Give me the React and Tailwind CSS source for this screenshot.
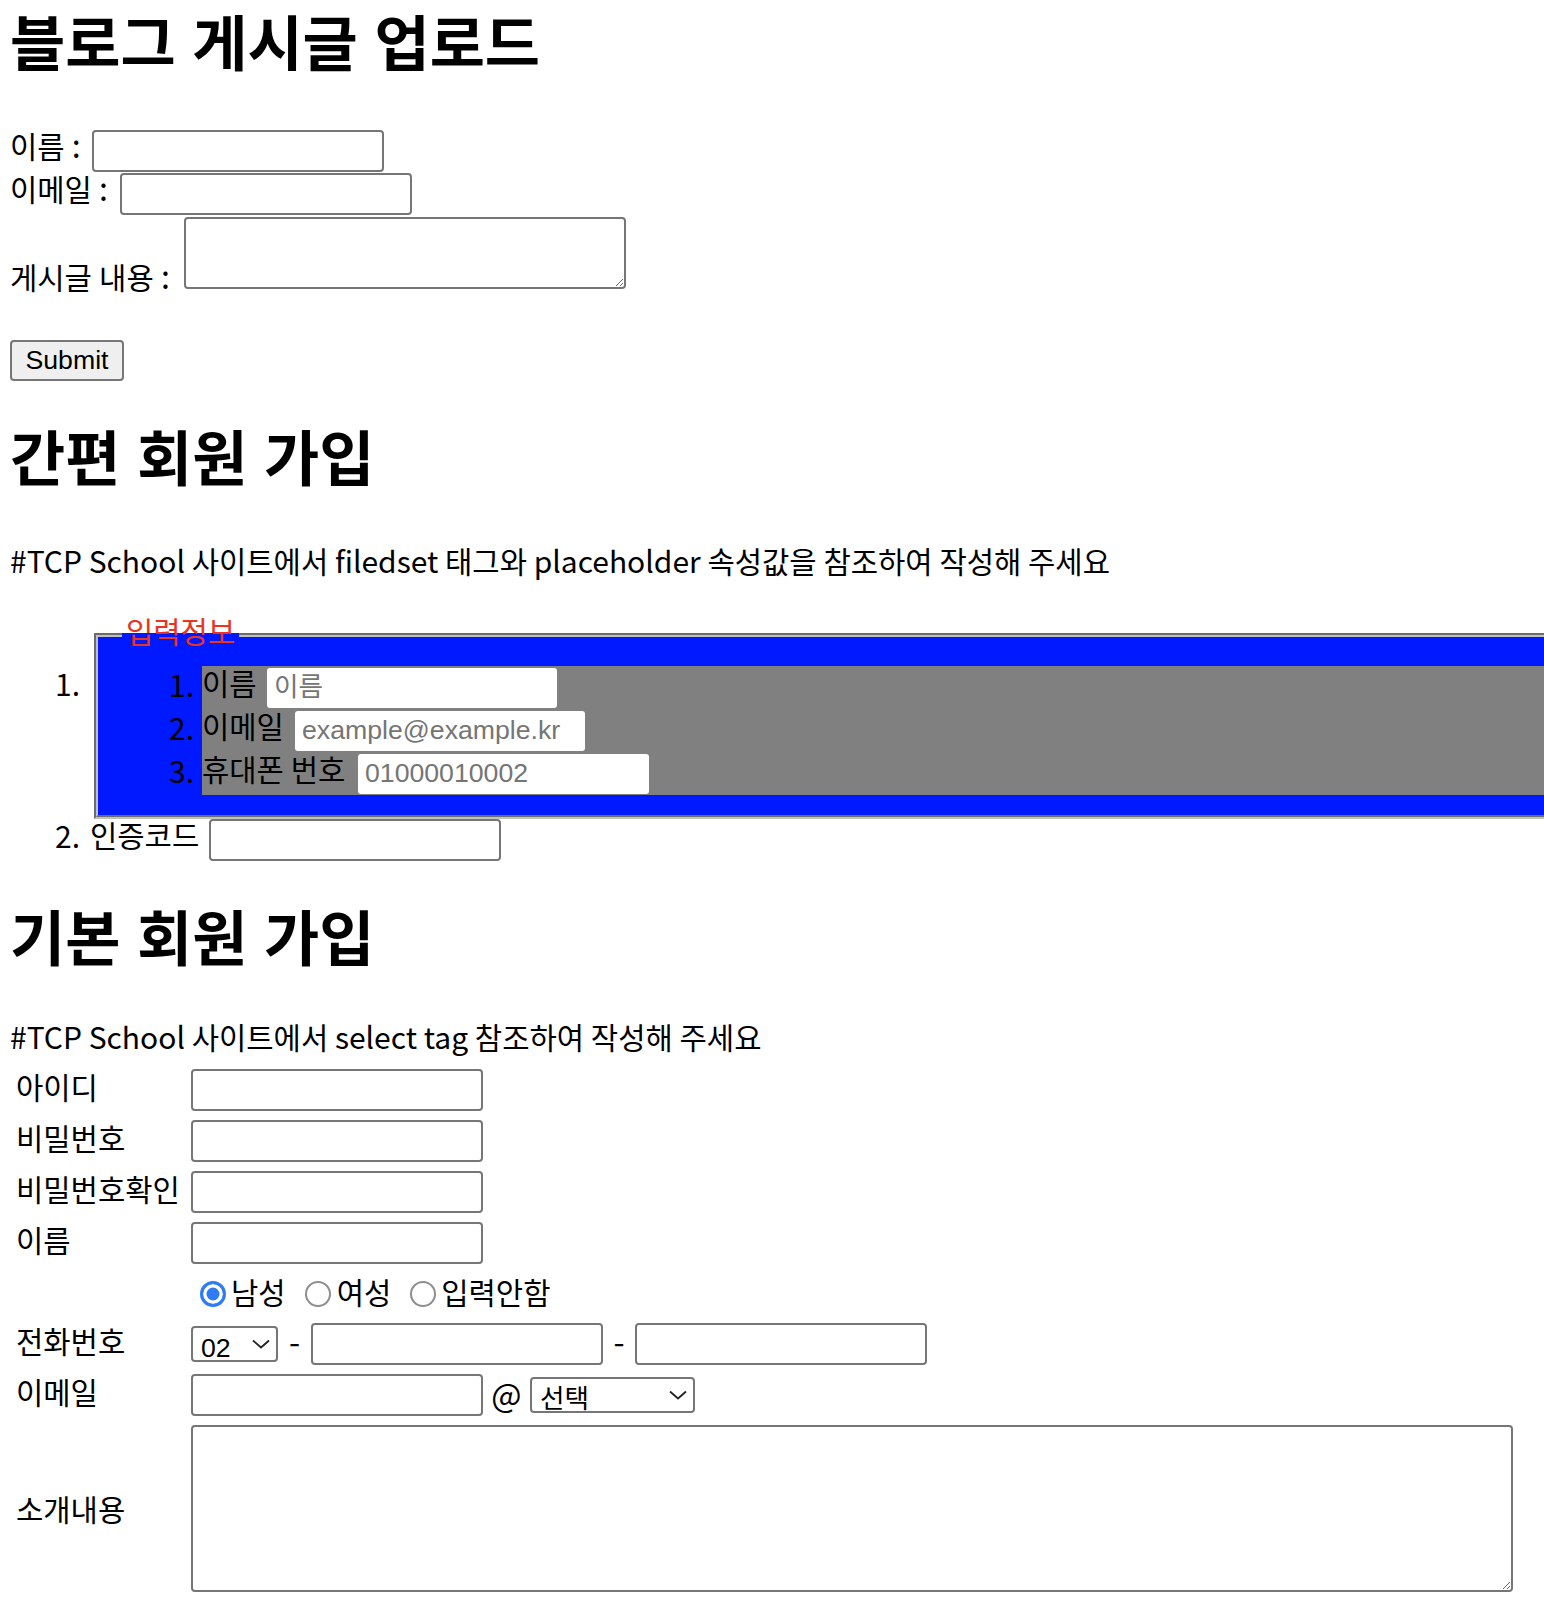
import React from "react";

const HANGUL = /([\uAC00-\uD7A3]+)/;

// Hangul runs get a slightly smaller size so they sit like the reference glyphs
const K = ({ children }) => {
  const parts = String(children).split(HANGUL);
  return parts.map((part, i) =>
    HANGUL.test(part) ? (
      <span key={i} className="text-[29.7px]">
        {part}
      </span>
    ) : (
      <span key={i}>{part}</span>
    )
  );
};

const field =
  "h-[42px] shrink-0 rounded-[4px] border-2 border-[#767676] bg-white px-[4px] text-[26.67px] leading-normal font-['Liberation_Sans','Noto_Sans_CJK_KR',sans-serif] outline-none";

const inner =
  "h-[40px] shrink-0 rounded-[3px] bg-white pl-[7px] text-[26.67px] leading-normal font-['Liberation_Sans','Noto_Sans_CJK_KR',sans-serif] placeholder:text-[#757575] outline-none";

const heading = "text-[60px] font-bold leading-[80px] [word-spacing:3px]";

const Chevron = () => (
  <svg
    width="18"
    height="10"
    viewBox="0 0 18 10"
    className="pointer-events-none absolute right-[8px] top-1/2 -translate-y-1/2"
  >
    <polyline
      points="1,1.5 9,8.5 17,1.5"
      fill="none"
      stroke="#222"
      strokeWidth="1.8"
    />
  </svg>
);

const Select = ({ width, children }) => (
  <div className={`relative h-[36px] shrink-0 ${width}`}>
    <select className="block h-full w-full appearance-none rounded-[4px] border-2 border-[#767676] bg-white pl-[8px] text-[26.67px] leading-normal text-black font-['Liberation_Sans','Noto_Sans_CJK_KR',sans-serif] outline-none">
      {children}
    </select>
    <Chevron />
  </div>
);

const Radio = ({ checked, className }) => (
  <input
    type="radio"
    name="gender"
    defaultChecked={checked}
    className={`h-[26px] w-[26px] shrink-0 appearance-none rounded-full border-2 border-[#8e8e8e] bg-white checked:border-[3px] checked:border-[#2f7cf6] checked:bg-[#2f7cf6] checked:shadow-[inset_0_0_0_3.5px_white] ${className}`}
  />
);

const innerRows = [
  { no: "1.", label: "이름", w: "w-[65px]", ph: "이름", size: "text-[23px]", iw: "w-[290px]" },
  { no: "2.", label: "이메일", w: "w-[93px]", ph: "example@example.kr", size: "", iw: "w-[290px]" },
  { no: "3.", label: "휴대폰 번호", w: "w-[156px]", ph: "01000010002", size: "", iw: "w-[291px]" },
];

export default function App() {
  return (
    <div className="min-h-[1610px] w-[1544px] overflow-hidden bg-white pl-[10px] text-[32px] leading-[40px] text-black font-['Noto_Sans_CJK_KR',sans-serif]">
      {/* 블로그 게시글 업로드 */}
      <h1 className={heading}>블로그 게시글 업로드</h1>

      <form className="mt-[50px]">
        <div className="flex h-[42px] items-center">
          <label className="mb-[12px] w-[82px] shrink-0">
            <K>이름 :</K>
          </label>
          <input type="text" className={`${field} w-[292px]`} />
        </div>
        <div className="mt-[1px] flex h-[42px] items-center">
          <label className="mb-[12px] w-[110px] shrink-0">
            <K>이메일 :</K>
          </label>
          <input type="email" className={`${field} w-[292px]`} />
        </div>
        <div className="mt-[2px] flex items-end">
          <label className="-mb-[8px] w-[174px] shrink-0">
            <K>게시글 내용 :</K>
          </label>
          <textarea className="h-[72px] w-[442px] shrink-0 resize rounded-[4px] border-2 border-[#767676] bg-white outline-none" />
        </div>
        <button
          type="button"
          className="mt-[51px] block h-[41px] w-[114px] rounded-[4px] border-2 border-[#767676] bg-[#efefef] text-[26.67px] leading-none font-['Liberation_Sans',Arial,sans-serif]"
        >
          Submit
        </button>
      </form>

      {/* 간편 회원 가입 */}
      <h1 className={`mt-[34px] ${heading}`}>간편 회원 가입</h1>
      <p className="mt-[45px] h-[40px] whitespace-nowrap text-[30px]">
        <K>#TCP School 사이트에서 filedset 태그와 placeholder 속성값을 참조하여 작성해 주세요</K>
      </p>

      <ol className="text-[30px]">
        <li className="mt-[35px] flex">
          <div className="w-[80px] shrink-0 pr-[10px] pt-[51px]">
            <div className="flex h-[43px] items-center justify-end pb-[10px]">1.</div>
          </div>
          <fieldset className="ml-[4px] w-[1500px] shrink-0 border-4 border-[#c0c0c0] bg-[#0019ff] px-[24px] pt-[11px] pb-[20px] [border-style:groove]">
            <legend className="h-[40px] px-[4px] pb-[10px] leading-[30px] text-[#eb3323]">
              <K>입력정보</K>
            </legend>
            <ol>
              {innerRows.map((row) => (
                <li key={row.no} className="flex h-[43px]">
                  <span className="flex w-[80px] shrink-0 items-center justify-end pr-[8px] pb-[8px]">
                    {row.no}
                  </span>
                  <div className="flex flex-1 items-center bg-[#808080]">
                    <span className={`mb-[10px] shrink-0 ${row.w}`}>
                      <K>{row.label}</K>
                    </span>
                    <input
                      type="text"
                      placeholder={row.ph}
                      className={`${inner} ${row.iw} ${row.size}`}
                    />
                  </div>
                </li>
              ))}
            </ol>
          </fieldset>
        </li>
        <li className="flex h-[43px] items-start">
          <span className="flex h-[42px] w-[80px] shrink-0 items-center justify-end pr-[10px] pb-[10px]">
            2.
          </span>
          <span className="flex h-[42px] w-[119px] shrink-0 items-center pb-[10px]">
            <K>인증코드</K>
          </span>
          <input type="text" className={`${field} w-[292px]`} />
        </li>
      </ol>

      {/* 기본 회원 가입 */}
      <h1 className={`mt-[33px] ${heading}`}>기본 회원 가입</h1>
      <p className="mt-[41px] h-[40px] whitespace-nowrap text-[30px]">
        <K>#TCP School 사이트에서 select tag 참조하여 작성해 주세요</K>
      </p>

      <div className="mt-[13px] flex flex-col gap-[9px] pl-[6px]">
        {["아이디", "비밀번호", "비밀번호확인", "이름"].map((label) => (
          <div key={label} className="flex h-[42px] items-center">
            <span className="mb-[8px] w-[175px] shrink-0">
              <K>{label}</K>
            </span>
            <input
              type={label.startsWith("비밀번호") ? "password" : "text"}
              className={`${field} w-[292px]`}
            />
          </div>
        ))}

        <div className="flex h-[41px] items-center">
          <span className="w-[175px] shrink-0" />
          <Radio checked className="ml-[9px]" />
          <span className="mb-[6px] ml-[5px]">
            <K>남성</K>
          </span>
          <Radio className="ml-[19px]" />
          <span className="mb-[6px] ml-[6px]">
            <K>여성</K>
          </span>
          <Radio className="ml-[19px]" />
          <span className="mb-[6px] ml-[5px]">
            <K>입력안함</K>
          </span>
        </div>

        <div className="flex h-[42px] items-center">
          <span className="mb-[8px] w-[175px] shrink-0">
            <K>전화번호</K>
          </span>
          <Select width="w-[87px]">
            <option>02</option>
            <option>031</option>
            <option>010</option>
          </Select>
          <span className="mb-[8px] w-[33px] shrink-0 text-center">-</span>
          <input type="text" className={`${field} w-[292px]`} />
          <span className="mb-[8px] w-[32px] shrink-0 text-center">-</span>
          <input type="text" className={`${field} w-[292px]`} />
        </div>

        <div className="flex h-[42px] items-center">
          <span className="mb-[8px] w-[175px] shrink-0">
            <K>이메일</K>
          </span>
          <input type="text" className={`${field} w-[292px]`} />
          <span className="mb-[4px] w-[47px] shrink-0 text-center">@</span>
          <Select width="w-[165px]">
            <option>선택</option>
            <option>naver.com</option>
            <option>gmail.com</option>
          </Select>
        </div>

        <div className="flex h-[167px] items-center">
          <span className="mb-[2px] w-[175px] shrink-0">
            <K>소개내용</K>
          </span>
          <textarea className="h-[167px] w-[1322px] shrink-0 resize rounded-[4px] border-2 border-[#767676] bg-white outline-none" />
        </div>
      </div>
    </div>
  );
}
